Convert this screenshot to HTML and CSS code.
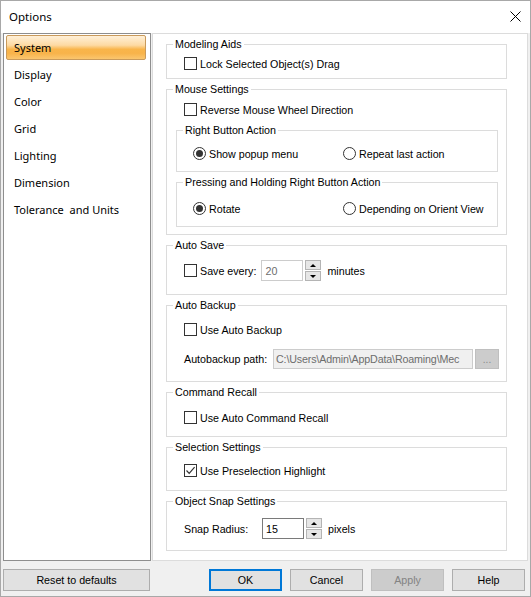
FILE: index.html
```html
<!DOCTYPE html>
<html>
<head>
<meta charset="utf-8">
<title>Options</title>
<link rel="stylesheet" href="styles.css">
</head>
<body>
<div class="window">
  <div class="titlebar">
    <span class="title">Options</span>
    <svg class="close" width="11" height="11" viewBox="0 0 11 11"><path d="M0.5 0.5 L10.5 10.5 M10.5 0.5 L0.5 10.5" stroke="#000" stroke-width="1" fill="none"/></svg>
  </div>
  <div class="main">
    <ul class="nav">
      <li class="nav-item selected">System</li>
      <li class="nav-item">Display</li>
      <li class="nav-item">Color</li>
      <li class="nav-item">Grid</li>
      <li class="nav-item">Lighting</li>
      <li class="nav-item">Dimension</li>
      <li class="nav-item">Tolerance  and Units</li>
    </ul>
    <div class="panel">
      <fieldset class="group">
        <legend>Modeling Aids</legend>
        <div class="body body-modeling">
          <label class="row"><span class="cb"></span>Lock Selected Object(s) Drag</label>
        </div>
      </fieldset>

      <fieldset class="group">
        <legend>Mouse Settings</legend>
        <div class="body body-mouse">
          <label class="row"><span class="cb"></span>Reverse Mouse Wheel Direction</label>
          <fieldset class="group inner inner-first">
            <legend>Right Button Action</legend>
            <div class="body body-rb">
              <div class="radios">
                <label class="row radio-col"><span class="rb on"></span>Show popup menu</label>
                <label class="row"><span class="rb"></span>Repeat last action</label>
              </div>
            </div>
          </fieldset>
          <fieldset class="group inner inner-second">
            <legend>Pressing and Holding Right Button Action</legend>
            <div class="body body-ph">
              <div class="radios">
                <label class="row radio-col"><span class="rb on"></span>Rotate</label>
                <label class="row"><span class="rb"></span>Depending on Orient View</label>
              </div>
            </div>
          </fieldset>
        </div>
      </fieldset>

      <fieldset class="group">
        <legend>Auto Save</legend>
        <div class="body body-autosave">
          <div class="row field-row">
            <span class="cb"></span><span>Save every:</span>
            <span class="numbox disabled save-box">20</span>
            <span class="spin"><span class="spin-btn"><span class="tri up"></span></span><span class="spin-btn"><span class="tri down"></span></span></span>
            <span class="unit">minutes</span>
          </div>
        </div>
      </fieldset>

      <fieldset class="group">
        <legend>Auto Backup</legend>
        <div class="body body-backup">
          <label class="row"><span class="cb"></span>Use Auto Backup</label>
          <div class="row path-row">
            <span class="path-label">Autobackup path:</span>
            <span class="pathbox"><span class="pathtext">C:\Users\Admin\AppData\Roaming\Mec</span></span>
            <span class="browse">...</span>
          </div>
        </div>
      </fieldset>

      <fieldset class="group">
        <legend>Command Recall</legend>
        <div class="body body-recall">
          <label class="row"><span class="cb"></span>Use Auto Command Recall</label>
        </div>
      </fieldset>

      <fieldset class="group">
        <legend>Selection Settings</legend>
        <div class="body body-selection">
          <label class="row"><span class="cb checked"><svg width="11" height="11" viewBox="0 0 11 11"><path d="M1.5 5.5 L4.2 8.3 L9.6 2.2" stroke="#333" stroke-width="1.2" fill="none"/></svg></span>Use Preselection Highlight</label>
        </div>
      </fieldset>

      <fieldset class="group">
        <legend>Object Snap Settings</legend>
        <div class="body body-snap">
          <div class="row field-row">
            <span class="snap-label">Snap Radius:</span>
            <span class="numbox snap-box">15</span>
            <span class="spin"><span class="spin-btn"><span class="tri up"></span></span><span class="spin-btn"><span class="tri down"></span></span></span>
            <span class="unit">pixels</span>
          </div>
        </div>
      </fieldset>
    </div>
  </div>
  <div class="footer">
    <button class="btn reset">Reset to defaults</button>
    <div class="footer-right">
      <button class="btn default">OK</button>
      <button class="btn">Cancel</button>
      <button class="btn disabled">Apply</button>
      <button class="btn">Help</button>
    </div>
  </div>
</div>
</body>
</html>
```

FILE: styles.css
```css
* { box-sizing: border-box; }
html, body { margin: 0; padding: 0; }
body { background: #f0f0f0; }

.window {
  width: 531px;
  height: 597px;
  border: 1px solid #a8a8a8;
  background: #f0f0f0;
  display: flex;
  flex-direction: column;
  font-family: "Liberation Sans", Arial, sans-serif;
  font-size: 10.7px;
  color: #000;
}

.titlebar {
  height: 32px;
  background: #fff;
  display: flex;
  align-items: center;
  justify-content: space-between;
  padding: 0 9px 1px 8px;
  flex: none;
}
.title {
  font-family: "Noto Sans", "Open Sans", sans-serif;
  font-size: 11.5px;
  color: #000;
}

.main {
  height: 528px;
  display: flex;
  gap: 1px;
  padding: 0 2px;
  flex: none;
}

.nav {
  width: 148px;
  height: 528px;
  margin: 0;
  padding: 1px 0 0 0;
  list-style: none;
  background: #fff;
  border: 1px solid #8e8e8e;
  display: flex;
  flex-direction: column;
  gap: 2px;
  font-family: "Noto Sans", "Open Sans", sans-serif;
  font-size: 11px;
}
.nav-item {
  height: 25px;
  margin: 0 4px 0 2px;
  padding-left: 7px;
  display: flex;
  align-items: center;
  white-space: pre;
  border: 1px solid transparent;
  border-radius: 2px;
}
.nav-item.selected {
  border-color: #c99a5b;
  background: linear-gradient(#fff0d8 0%, #fddaa3 40%, #f9b54b 58%, #f8b34a 75%, #fbc66f 100%);
}

.panel {
  width: 376px;
  height: 528px;
  background: #fff;
  border: 1px solid #dcdcdc;
  padding: 4px 0 0 13px;
  display: flex;
  flex-direction: column;
  gap: 4px;
}

.group {
  margin: 0;
  padding: 0;
  min-width: 0;
  width: 341px;
  border: 1px solid #dcdcdc;
}
.group legend {
  margin-left: 6px;
  padding: 0 2px;
  line-height: 13px;
  font-size: 10.7px;
}
.body { display: flex; flex-direction: column; }

.row {
  display: flex;
  align-items: center;
  gap: 3px;
  height: 13px;
  white-space: nowrap;
}

.cb {
  width: 13px;
  height: 13px;
  border: 1px solid #333;
  background: #fff;
  flex: none;
  display: flex;
  align-items: center;
  justify-content: center;
}
.rb {
  width: 13px;
  height: 13px;
  border: 1px solid #333;
  border-radius: 50%;
  background: #fff;
  flex: none;
  display: flex;
  align-items: center;
  justify-content: center;
}
.rb.on::after {
  content: "";
  width: 7px;
  height: 7px;
  border-radius: 50%;
  background: #333;
}

.body-modeling { padding: 6px 0 8px 17px; }
.body-mouse { padding: 7px 8px 7px 9px; }
.body-mouse > .row { margin-left: 8px; }
.inner { width: 322px; }
.inner-first { margin-top: 8px; }
.inner-second { margin-top: 4px; }
.body-rb { padding: 10px 0 11px 16px; }
.body-ph { padding: 13px 0 11px 16px; }
.radios { display: flex; }
.radio-col { width: 150px; }

.body-autosave { padding: 8px 0 13px 17px; }
.field-row { height: 21px; gap: 0; }
.field-row .cb { margin-right: 3px; }
.numbox {
  width: 42px;
  height: 21px;
  border: 1px solid #7a7a7a;
  background: #fff;
  display: flex;
  align-items: center;
  padding-left: 3px;
}
.numbox.disabled { border-color: #cccccc; color: #6d6d6d; }
.save-box { margin-left: 5px; }
.snap-label { width: 78px; }
.spin {
  width: 16px;
  height: 21px;
  margin-left: 2px;
  display: flex;
  flex-direction: column;
  justify-content: space-between;
}
.spin-btn {
  height: 10px;
  border: 1px solid #b4b4b4;
  background: #e6e6e6;
  display: flex;
  align-items: center;
  justify-content: center;
}
.tri { width: 0; height: 0; border-left: 3px solid transparent; border-right: 3px solid transparent; }
.tri.up { border-bottom: 3px solid #000; }
.tri.down { border-top: 3px solid #000; }
.unit { margin-left: 6px; }

.body-backup { padding: 11px 0 12px 17px; }
.path-row { margin-top: 13px; height: 20px; gap: 0; }
.path-label { width: 89px; }
.pathbox {
  width: 200px;
  height: 20px;
  border: 1px solid #cccccc;
  background: #f0f0f0;
  color: #6d6d6d;
  padding-left: 2px;
  overflow: hidden;
  white-space: nowrap;
  display: flex;
  align-items: center;
}
.pathtext { letter-spacing: -0.15px; }
.browse {
  width: 24px;
  height: 20px;
  margin-left: 2px;
  background: #cccccc;
  border: 1px solid #bfbfbf;
  color: #8a8a8a;
  display: flex;
  align-items: flex-end;
  justify-content: center;
  padding-bottom: 3px;
  font-size: 10px;
  line-height: 10px;
}

.body-recall { padding: 12px 0 12px 17px; }
.body-selection { padding: 10px 0 13px 17px; }
.body-snap { padding: 10px 0 11px 17px; }

.footer {
  height: 35px;
  display: flex;
  align-items: flex-start;
  justify-content: space-between;
  padding: 8px 5px 0 2px;
  flex: none;
}
.footer-right { display: flex; gap: 8px; }
.btn {
  height: 22px;
  width: 73px;
  background: #e1e1e1;
  border: 1px solid #adadad;
  font-family: "Liberation Sans", Arial, sans-serif;
  font-size: 10.7px;
  color: #000;
  padding: 0;
  margin: 0;
}
.btn.reset { width: 147px; }
.btn.default { border: 2px solid #0078d7; }
.btn.disabled { background: #cccccc; border-color: #bfbfbf; color: #838383; }
```
